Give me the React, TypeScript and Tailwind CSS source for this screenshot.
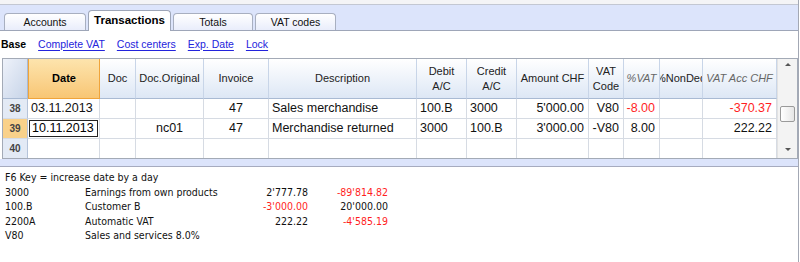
type Align = 'left' | 'center' | 'right';

type Column = {
  key: string;
  head: string[];
  align: Align;
  italic?: boolean;
};

const columns: Column[] = [
  { key: 'date', head: ['Date'], align: 'left' },
  { key: 'doc', head: ['Doc'], align: 'left' },
  { key: 'orig', head: ['Doc.Original'], align: 'center' },
  { key: 'inv', head: ['Invoice'], align: 'center' },
  { key: 'desc', head: ['Description'], align: 'left' },
  { key: 'debit', head: ['Debit', 'A/C'], align: 'left' },
  { key: 'credit', head: ['Credit', 'A/C'], align: 'left' },
  { key: 'amount', head: ['Amount CHF'], align: 'right' },
  { key: 'vat', head: ['VAT', 'Code'], align: 'right' },
  { key: 'pct', head: ['%VAT'], align: 'right', italic: true },
  { key: 'nonded', head: ['%NonDed'], align: 'right' },
  { key: 'vatacc', head: ['VAT Acc CHF'], align: 'right', italic: true },
];

type Row = {
  num: number;
  cells: Record<string, string>;
  red?: string[];
  selected?: boolean;
};

const rows: Row[] = [
  {
    num: 38,
    cells: { date: '03.11.2013', inv: '47', desc: 'Sales merchandise', debit: '100.B', credit: '3000', amount: "5'000.00", vat: 'V80', pct: '-8.00', vatacc: '-370.37' },
    red: ['pct', 'vatacc'],
  },
  {
    num: 39,
    cells: { date: '10.11.2013', orig: 'nc01', inv: '47', desc: 'Merchandise returned', debit: '3000', credit: '100.B', amount: "3'000.00", vat: '-V80', pct: '8.00', vatacc: '222.22' },
    selected: true,
  },
  { num: 40, cells: {} },
];

const info = [
  { code: '3000', label: 'Earnings from own products', a: "2'777.78", b: "-89'814.82", redA: false, redB: true },
  { code: '100.B', label: 'Customer B', a: "-3'000.00", b: "20'000.00", redA: true, redB: false },
  { code: '2200A', label: 'Automatic VAT', a: '222.22', b: "-4'585.19", redA: false, redB: true },
  { code: 'V80', label: 'Sales and services 8.0%', a: '', b: '', redA: false, redB: false },
];

const tabs = [
  { label: 'Accounts', width: 'w-[82px]' },
  { label: 'Transactions', width: 'w-[83px]', active: true },
  { label: 'Totals', width: 'w-[80px]' },
  { label: 'VAT codes', width: 'w-[81px]' },
];

const alignClass: Record<Align, string> = {
  left: 'justify-start pl-[3px]',
  center: 'justify-center',
  right: 'justify-end pr-[4px]',
};

function Tabs() {
  return (
    <div className="h-[31px]">
      <div className="h-[5px] bg-[#f4f4f6] border-b border-[#c3c7d2]" />
      <div className="flex h-[26px] items-end gap-[2px] pl-[4px] bg-[#dce4fb] border-b border-[#9ea6b8]">
        {tabs.map(t =>
          t.active ? (
            <div
              key={t.label}
              className={`${t.width} -mb-px flex h-[21px] items-center justify-center rounded-t-[4px] border border-b-0 border-[#9ea6b8] bg-white text-[11.5px] font-bold text-black`}
            >
              {t.label}
            </div>
          ) : (
            <div
              key={t.label}
              className={`${t.width} flex h-[17px] items-center justify-center rounded-t-[4px] border border-b-0 border-[#a8afc0] bg-linear-to-b from-white to-[#e9edfb] pt-px text-[10.5px] text-[#111]`}
            >
              {t.label}
            </div>
          ),
        )}
      </div>
    </div>
  );
}

function LinkBar() {
  return (
    <div className="flex h-[27px] items-center gap-3 pl-px text-[10.5px]">
      <span className="font-bold text-black">Base</span>
      {['Complete VAT', 'Cost centers', 'Exp. Date', 'Lock'].map(l => (
        <span key={l} className="text-[#2323dc] underline underline-offset-[2px]">
          {l}
        </span>
      ))}
    </div>
  );
}

function Scrollbar() {
  return (
    <div className="flex w-[21px] flex-col items-center bg-[#f3f3f3] border-l border-[#e2e2e2]">
      <div className="mt-[4px] h-0 w-0 border-x-[3px] border-b-[3px] border-x-transparent border-b-[#555]" />
      <div className="mt-[40px] h-[16px] w-[15px] rounded-[2px] border border-[#9a9a9a] bg-linear-to-r from-white to-[#e6e6e6]" />
      <div className="mt-auto mb-[7px] h-0 w-0 border-x-[3px] border-t-[3px] border-x-transparent border-t-[#555]" />
    </div>
  );
}

function Grid() {
  return (
    <div className="ml-[2px] flex w-[796px] border border-[#a3aab6] bg-white text-[12.5px]">
      <div className="grid w-[774px] grid-cols-[25px_72px_36px_68px_65px_148px_50px_50px_72px_35px_36px_43px_74px] grid-rows-[40px_20px_20px_19px]">
        <div className="border-r border-b border-[#a9bad3] bg-linear-to-br from-[#eef2fa] to-[#c7d4e8]" />
        {columns.map(c =>
          c.key === 'date' ? (
            <div
              key={c.key}
              className="flex items-center justify-center border border-t-0 border-[#f0a43a] bg-linear-to-b from-[#fde4ad] to-[#f8c674] text-[11px] font-bold text-black"
            >
              Date
            </div>
          ) : (
            <div
              key={c.key}
              className={`flex flex-col items-center justify-center overflow-hidden whitespace-nowrap border-r border-b border-r-[#c8d5e8] border-b-[#a9bad3] bg-linear-to-b from-white to-[#dde7f5] text-[11px] leading-[15px] ${c.italic ? 'italic text-[#666]' : 'text-[#222]'}`}
            >
              {c.head.map(h => (
                <span key={h}>{h}</span>
              ))}
            </div>
          ),
        )}
        {rows.map((r, ri) => {
          const last = ri === rows.length - 1;
          return [
            <div
              key={`n${r.num}`}
              className={`flex items-center justify-center border-r border-[#b5c3d9] ${last ? '' : 'border-b border-b-[#d4dbe6]'} ${r.selected ? 'bg-[#f9d18a]' : 'bg-[#e3eaf5]'} text-[10px] font-bold text-[#444]`}
            >
              {r.num}
            </div>,
            ...columns.map(c => {
              const value = r.cells[c.key] ?? '';
              const red = r.red?.includes(c.key);
              if (c.key === 'date' && r.selected) {
                return (
                  <div key={`${r.num}${c.key}`} className="border-r border-b border-[#d6dbe3] p-px">
                    <div className="flex h-full items-center border border-[#222] pl-[2px]">{value}</div>
                  </div>
                );
              }
              return (
                <div
                  key={`${r.num}${c.key}`}
                  className={`flex items-center whitespace-nowrap border-r border-[#d6dbe3] ${last ? '' : 'border-b'} ${alignClass[c.align]} ${red ? 'text-[#ff1f1f]' : 'text-[#111]'}`}
                >
                  {value}
                </div>
              );
            }),
          ];
        })}
      </div>
      <Scrollbar />
    </div>
  );
}

function InfoPanel() {
  return (
    <div className="flex-1 border-t border-[#a6abbf] pt-[3px] pl-[5px] font-['DejaVu_Sans_Condensed','Liberation_Sans',sans-serif] font-stretch-condensed text-[10.5px] leading-[14.6px] text-[#111]">
      <div>F6 Key = increase date by a day</div>
      {info.map(i => (
        <div key={i.code} className="grid grid-cols-[80px_150px_73px_80px]">
          <span>{i.code}</span>
          <span>{i.label}</span>
          <span className={`text-right ${i.redA ? 'text-[#ff1f1f]' : ''}`}>{i.a}</span>
          <span className={`text-right ${i.redB ? 'text-[#ff1f1f]' : ''}`}>{i.b}</span>
        </div>
      ))}
    </div>
  );
}

export default function App() {
  return (
    <div className="flex h-[262px] w-[800px] flex-col overflow-hidden bg-white font-['Liberation_Sans',Arial,sans-serif]">
      <div className="w-[799px] border-r border-[#a3a8b4]">
        <Tabs />
      </div>
      <div className="flex w-[799px] flex-1 flex-col border-r border-[#a3a8b4]">
        <LinkBar />
        <Grid />
        <div className="h-[7px] bg-[#dce4fb]" />
        <InfoPanel />
      </div>
    </div>
  );
}
